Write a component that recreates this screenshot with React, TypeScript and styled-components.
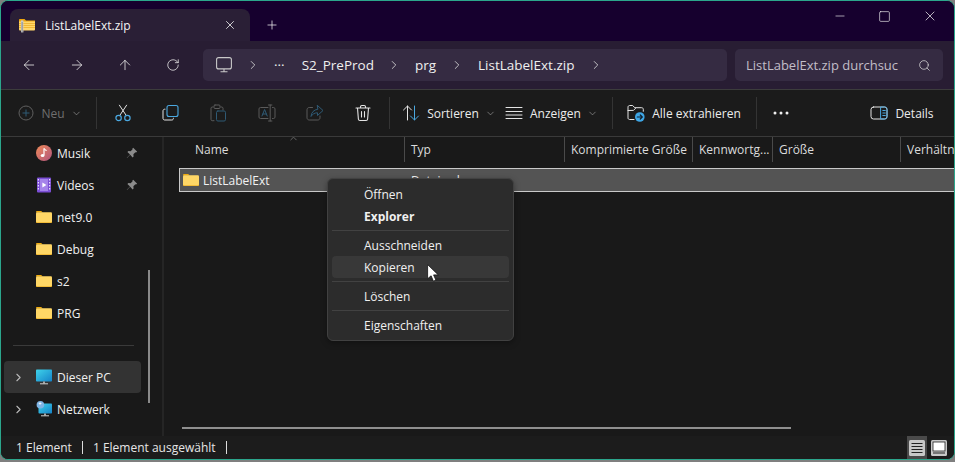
import React from "react";
import styled, { createGlobalStyle } from "styled-components";
import {
  ArrowLeft,
  ArrowRight,
  ArrowUp,
  ChevronDown,
  ChevronRight,
  ChevronUp,
  Minus,
  Plus,
  RotateCw,
  Search,
  Square,
  X,
} from "lucide-react";

const GlobalStyle = createGlobalStyle`
  html, body {
    margin: 0;
    background: #7f7f7f;
    overflow: hidden;
  }
  body {
    font-family: "Open Sans", "Noto Sans", "Liberation Sans", sans-serif;
    font-size: 12px;
    color: #ececec;
  }
`;

const FolderIcon: React.FC = () => (
  <svg width="16" height="16" viewBox="0 0 16 16">
    <path d="M0 3.2C0 2.5.5 2 1.2 2h4l1.6 1.6H0z" fill="#f0ab0e" />
    <path d="M0 4.5c0-.8.6-1.3 1.3-1.3h13.4c.7 0 1.3.5 1.3 1.3v8.2c0 .8-.6 1.3-1.3 1.3H1.3C.6 14 0 13.5 0 12.7z" fill="#ffd766" />
    <path d="M0 12.7c0 .8.6 1.3 1.3 1.3h13.4c.7 0 1.3-.5 1.3-1.3v-.4c0 .7-.6 1.1-1.3 1.1H1.3C.6 13.4 0 13 0 12.3z" fill="#e8a20c" />
  </svg>
);

const ZipIcon: React.FC = () => (
  <svg width="16" height="16" viewBox="0 0 16 16">
    <path d="M0 3C0 2.4.5 2 1 2h4.5L7 3.4H16V5H0z" fill="#eea60e" />
    <path d="M0 4.6h16v7.6c0 .8-.5 1.3-1.2 1.3H1.2C.5 13.5 0 13 0 12.2z" fill="#ffd76a" />
    <path d="M0 6.5h16M0 8.5h16M0 10.5h16" stroke="#e9a91d" strokeWidth="0.7" />
    <rect x="2" y="3.4" width="2.4" height="12" fill="#c9c9c9" />
    <path d="M2.4 6h1.6M2.4 8h1.6M2.4 10h1.6M2.4 12h1.6M2.4 14h1.6" stroke="#6d6d6d" strokeWidth="0.8" />
  </svg>
);

const MusicIcon: React.FC = () => (
  <svg width="16" height="16" viewBox="0 0 16 16">
    <defs>
      <linearGradient id="mus" x1="0" y1="0" x2="1" y2="1">
        <stop offset="0" stopColor="#ef8a58" />
        <stop offset="1" stopColor="#b0547e" />
      </linearGradient>
    </defs>
    <circle cx="8" cy="8" r="8" fill="url(#mus)" />
    <path d="M8 3.5v6.6" stroke="#fff" strokeWidth="1.2" />
    <path d="M8 3.4c.6 1.4 1.8 1.6 2.6 2.2" stroke="#fff" strokeWidth="1.1" fill="none" />
    <ellipse cx="6.6" cy="10.6" rx="1.9" ry="1.5" fill="#fff" />
  </svg>
);

const VideoIcon: React.FC = () => (
  <svg width="16" height="16" viewBox="0 0 16 16">
    <rect x="1" y="0.5" width="14" height="15" rx="1" fill="#7c4fd6" />
    <rect x="4" y="2" width="8" height="12" fill="#a583ea" />
    <path d="M1.8 2h1.2v1.6H1.8zM1.8 5h1.2v1.6H1.8zM1.8 8h1.2v1.6H1.8zM1.8 11h1.2v1.6H1.8zM13 2h1.2v1.6H13zM13 5h1.2v1.6H13zM13 8h1.2v1.6H13zM13 11h1.2v1.6H13z" fill="#e8defc" />
    <path d="M6.4 5.6l4 2.4-4 2.4z" fill="#fff" />
  </svg>
);

const PcIcon: React.FC = () => (
  <svg width="16" height="16" viewBox="0 0 16 16">
    <defs>
      <linearGradient id="pc" x1="0" y1="0" x2="1" y2="1">
        <stop offset="0" stopColor="#3fd3ea" />
        <stop offset="1" stopColor="#1583c9" />
      </linearGradient>
    </defs>
    <rect x="0" y="0.5" width="16" height="12" rx="0.8" fill="url(#pc)" />
    <rect x="7" y="12.5" width="2" height="2" fill="#a5a5a5" />
    <rect x="4" y="14.3" width="8" height="1" fill="#cfcfcf" />
  </svg>
);

const NetworkIcon: React.FC = () => (
  <svg width="16" height="16" viewBox="0 0 16 16">
    <rect x="2.5" y="2.5" width="13.5" height="10" rx="0.8" fill="url(#pc)" />
    <rect x="8" y="12.5" width="2" height="2" fill="#a5a5a5" />
    <rect x="5" y="14.3" width="8" height="1" fill="#cfcfcf" />
    <circle cx="4.4" cy="3.8" r="3.8" fill="#7fb4e4" />
    <path d="M2.6 2.2c1-.8 2.2-.8 3 .2-.4 1-1.2 1.4-2 1-.6-.2-.9-.7-1-1.2z" fill="#e8f2fb" />
  </svg>
);

const PinIcon: React.FC = () => (
  <svg width="12" height="12" viewBox="0 0 12 12">
    <path d="M7.2.8l4 4-1.2.6-.6-.2-2 2 .2 2.2-1 1-2.4-2.6L1 11l-.2-.2 3.2-3.3L1.4 5l1-1 2.2.2 2-2-.2-.6z" fill="#8b8b8b" />
  </svg>
);

const ToolSvg = styled.svg`
  width: 18px;
  height: 18px;
  fill: none;
  stroke-width: 1;
  stroke-linecap: round;
  stroke-linejoin: round;
`;

const CutIcon: React.FC = () => (
  <ToolSvg viewBox="0 0 18 18">
    <path d="M5.8 11.4L12.6 1.2M12.2 11.4L5.4 1.2" stroke="#e4e4e4" />
    <circle cx="4.6" cy="14" r="2.7" stroke="#4aa8e0" strokeWidth="1.2" />
    <circle cx="13.4" cy="14" r="2.7" stroke="#4aa8e0" strokeWidth="1.2" />
  </ToolSvg>
);

const CopyIcon: React.FC = () => (
  <ToolSvg viewBox="0 0 18 18">
    <path d="M3 5.2H2.6C1.7 5.2 1 6 1 6.9v7.5C1 15.3 1.7 16 2.6 16h7.2c1 0 1.6-.7 1.6-1.6v-.2" stroke="#e4e4e4" />
    <rect x="5" y="1.5" width="11" height="11" rx="2" stroke="#4aa8e0" strokeWidth="1.1" />
  </ToolSvg>
);

const PasteIcon: React.FC = () => (
  <ToolSvg viewBox="0 0 18 18">
    <path d="M3 3H2.2C1.5 3 1 3.6 1 4.2v11.3c0 .7.5 1.2 1.2 1.2H4M11 3h.8c.7 0 1.2.6 1.2 1.2V6" stroke="#5b5b5b" />
    <rect x="4" y="1" width="6" height="3.5" rx="1" stroke="#5b5b5b" />
    <rect x="6.5" y="7" width="9" height="10" rx="1.4" stroke="#2f5a75" />
  </ToolSvg>
);

const RenameIcon: React.FC = () => (
  <ToolSvg viewBox="0 0 18 18">
    <path d="M10 3.5H2.4C1.6 3.5 1 4.1 1 4.9v8.2c0 .8.6 1.4 1.4 1.4H10M14.5 3.5h1.1c.8 0 1.4.6 1.4 1.4v8.2c0 .8-.6 1.4-1.4 1.4h-1.1M12.2 1v16M10.5 1h3.4M10.5 17h3.4" stroke="#5b5b5b" />
    <path d="M4 12L6.6 5.5 9.2 12M5 10h3.2" stroke="#2f5a75" />
  </ToolSvg>
);

const ShareIcon: React.FC = () => (
  <ToolSvg viewBox="0 0 18 18">
    <path d="M6.5 3.5H3.2C2 3.5 1 4.5 1 5.7v8.1C1 15 2 16 3.2 16h8.6c1.2 0 2.2-1 2.2-2.2V12" stroke="#5b5b5b" />
    <path d="M11.5 1.5L17 6.5l-5.5 5V8.8c-2.8 0-5 1.1-6.5 3.7.3-4 2.8-6.8 6.5-7.2z" stroke="#2f5a75" />
  </ToolSvg>
);

const TrashIcon: React.FC = () => (
  <ToolSvg viewBox="0 0 18 18">
    <path d="M2 4h14M6.5 4V2.8C6.5 2 7 1.5 7.8 1.5h2.4c.8 0 1.3.5 1.3 1.3V4M3.5 4l.9 11.2c.1 1 .8 1.3 1.5 1.3h6.2c.7 0 1.4-.3 1.5-1.3L14.500 4M7.500 7.500v5.500M10.500 7.500v5.500" stroke="#e4e4e4" strokeWidth="1.1" />
  </ToolSvg>
);

const SortIcon: React.FC = () => (
  <ToolSvg viewBox="0 0 18 18">
    <path d="M5.5 16V2M1.500 6l4-4 4 4" stroke="#e4e4e4" />
    <path d="M12.500 2v14M8.500 12l4 4 4-4" stroke="#4aa8e0" />
  </ToolSvg>
);

const ViewIcon: React.FC = () => (
  <ToolSvg viewBox="0 0 18 18">
    <path d="M1 3.500h16M1 7.500h16M1 11h16M1 14.500h16" stroke="#e4e4e4" />
  </ToolSvg>
);

const ExtractIcon: React.FC = () => (
  <ToolSvg viewBox="0 0 18 18">
    <path d="M7 15.500H2.600C1.700 15.500 1 14.800 1 13.900V3.100C1 2.200 1.700 1.500 2.600 1.500h3.100l2 2.200h7c.9 0 1.600.7 1.600 1.600v2" stroke="#e4e4e4" />
    <path d="M1 6.500l5.500-.1 2-2" stroke="#e4e4e4" />
    <circle cx="12.800" cy="13" r="4.800" fill="#3ea6e6" />
    <path d="M10.300 13h4.800M13.300 11l2 2-2 2" stroke="#10202c" strokeWidth="1.200" />
  </ToolSvg>
);

const DetailsIcon: React.FC = () => (
  <ToolSvg viewBox="0 0 18 18">
    <rect x="1" y="3" width="16" height="12" rx="2.500" stroke="#e4e4e4" />
    <path d="M11 3h3.500C16 3 17 4 17 5.500v7c0 1.500-1 2.500-2.500 2.500H11z" stroke="#4aa8e0" />
    <path d="M12.800 6.500h2.500M12.800 9h2.500M12.800 11.500h2.500" stroke="#4aa8e0" />
  </ToolSvg>
);

const MoreDots: React.FC = () => (
  <svg width="16" height="4" viewBox="0 0 16 4">
    <circle cx="2" cy="2" r="1.500" fill="#f0f0f0" />
    <circle cx="8" cy="2" r="1.500" fill="#f0f0f0" />
    <circle cx="14" cy="2" r="1.500" fill="#f0f0f0" />
  </svg>
);

const PcOutlineIcon: React.FC = () => (
  <svg width="16" height="16" viewBox="0 0 16 16" fill="none" stroke="#c9c9c9" strokeWidth="1.100">
    <rect x="0.600" y="0.600" width="14.800" height="11.300" rx="2" />
    <path d="M8 12v2.500M4.500 14.800h7" />
  </svg>
);

const Cursor: React.FC = () => (
  <CursorSvg viewBox="0 0 12 18">
    <path d="M.6.6v14.200l3.500-3 2.300 5.400 2.500-1.100-2.300-5.200h4.700z" fill="#fff" stroke="#111" strokeWidth="0.800" />
  </CursorSvg>
);

const CursorSvg = styled.svg`
  position: absolute;
  left: 426px;
  top: 263px;
  width: 12px;
  height: 18px;
`;

const Frame = styled.div`
  position: relative;
  box-sizing: border-box;
  width: 955px;
  height: 460px;
  border: 1px solid #2ba68c;
  border-left-width: 1px;
  border-radius: 8px;
  overflow: hidden;
  display: flex;
  flex-direction: column;
  background: #191919;
`;

const TitleBar = styled.div`
  height: 40px;
  flex: none;
  background: #16002e;
  display: flex;
  align-items: flex-end;
  padding-left: 9px;
`;

const Tab = styled.div`
  width: 240px;
  height: 32px;
  background: #2a1f36;
  border-radius: 8px 8px 0 0;
  display: flex;
  align-items: center;
  padding: 0 13px 0 9px;
  box-sizing: border-box;
  gap: 10px;
`;

const TabTitle = styled.span`
  flex: 1;
  color: #f4f4f4;
  font-size: 12px;
`;

const NewTab = styled.div`
  width: 44px;
  height: 32px;
  display: flex;
  align-items: center;
  justify-content: center;
  color: #f0f0f0;
`;

const WindowControls = styled.div`
  margin-left: auto;
  align-self: flex-start;
  display: flex;
  margin-right: 2px;
`;

const WindowButton = styled.div`
  width: 45px;
  height: 30px;
  display: flex;
  align-items: center;
  justify-content: center;
  color: #f2f2f2;
`;

const NavBar = styled.div`
  height: 48px;
  flex: none;
  box-sizing: content-box;
  background: #281d33;
  border-bottom: 1px solid #3c3c3c;
  display: flex;
  align-items: center;
  padding-left: 4px;
`;

const NavButton = styled.div`
  width: 48px;
  height: 32px;
  display: flex;
  align-items: center;
  justify-content: center;
  color: #ededed;
`;

const Field = styled.div`
  height: 32px;
  background: #352b42;
  border-radius: 5px;
  display: flex;
  align-items: center;
  font-size: 13.500px;
  box-sizing: border-box;
`;

const Breadcrumb = styled(Field)`
  width: 524px;
  margin-left: 6px;
  padding-left: 13px;
  color: #efefef;
`;

const SearchField = styled(Field)`
  width: 208px;
  margin-left: 8px;
  padding: 0 12px 0 11px;
  justify-content: space-between;
  color: #c2bec8;
  font-size: 13px;
  white-space: nowrap;
`;

const Crumb = styled.span`
  white-space: nowrap;
`;

const CrumbArrow = styled.span<{ $before: number; $after: number }>`
  display: flex;
  color: #dddddd;
  margin: 0 ${(p) => p.$after}px 0 ${(p) => p.$before}px;
`;

const Toolbar = styled.div`
  height: 46px;
  flex: none;
  background: #1b1b1b;
  border-bottom: 1px solid #3a3a3a;
  display: flex;
  align-items: center;
  padding-left: 11px;
`;

const ToolButton = styled.div<{ $w: number; $dim?: boolean }>`
  width: ${(p) => p.$w}px;
  height: 32px;
  flex: none;
  display: flex;
  align-items: center;
  justify-content: center;
  gap: 7px;
  color: ${(p) => (p.$dim ? "#6f6f6f" : "#ececec")};
  white-space: nowrap;
`;

const ToolCaret = styled(ChevronDown)`
  color: #a8a8a8;
  margin-left: -1px;
`;

const ToolDivider = styled.div<{ $l: number; $r: number }>`
  width: 1px;
  height: 32px;
  flex: none;
  background: #343434;
  margin: 0 ${(p) => p.$r}px 0 ${(p) => p.$l}px;
`;

const Spacer = styled.div`
  flex: 1;
`;

const Main = styled.div`
  position: relative;
  flex: 1;
  min-height: 0;
  display: flex;
  background: #191919;
`;

const Sidebar = styled.nav`
  position: relative;
  width: 158px;
  flex: none;
  border-right: 2px solid #252525;
  padding-left: 3px;
  box-sizing: content-box;
  margin-right: 0;
`;

const SideRow = styled.div<{ $active?: boolean }>`
  width: 137px;
  height: 32px;
  box-sizing: border-box;
  display: flex;
  align-items: center;
  padding: 0 3px 0 8px;
  border-radius: 4px;
  background: ${(p) => (p.$active ? "#333333" : "transparent")};
  color: #f0f0f0;
`;

const Expander = styled.span`
  width: 24px;
  display: flex;
  color: #b9b9b9;
`;

const SideLabel = styled.span`
  margin-left: 5px;
  flex: 1;
`;

const SideSeparator = styled.div`
  height: 32px;
  display: flex;
  align-items: center;
  padding: 0 9px;
  width: 121px;
  &::after {
    content: "";
    flex: 1;
    height: 1px;
    background: #3a3a3a;
  }
`;

const SideScroll = styled.div`
  position: absolute;
  left: 147px;
  top: 133px;
  width: 2px;
  height: 133px;
  background: #8a8a8a;
`;

const Content = styled.section`
  position: relative;
  flex: 1;
  min-width: 0;
  overflow: hidden;
  padding-left: 15px;
`;

const columns = "226px 160px 128px 80px 128px 1fr";

const HeaderRow = styled.div`
  height: 31px;
  display: grid;
  grid-template-columns: ${columns};
`;

const HeaderCell = styled.div<{ $first?: boolean }>`
  height: 25px;
  box-sizing: border-box;
  display: flex;
  align-items: center;
  white-space: nowrap;
  overflow: hidden;
  padding-left: ${(p) => (p.$first ? 16 : 6)}px;
  border-right: 1px solid #4a4a4a;
  color: #dcdcdc;
  &:last-child {
    border-right: 0;
  }
`;

const SortCaret = styled(ChevronUp)`
  position: absolute;
  left: 124px;
  top: -4px;
  color: #9a9a9a;
`;

const FileRow = styled.div`
  height: 24px;
  box-sizing: border-box;
  display: grid;
  grid-template-columns: ${columns};
  align-items: center;
  background: #545454;
  border: 1px solid #c9c9c9;
  border-right: 0;
  color: #f2f2f2;
`;

const FileName = styled.div`
  display: flex;
  align-items: center;
  gap: 4px;
  padding-left: 3px;
`;

const FileType = styled.div`
  padding-left: 5px;
`;

const HScroll = styled.div`
  position: absolute;
  left: 18px;
  bottom: 7px;
  width: 609px;
  height: 2px;
  background: #8f8f8f;
`;

const Menu = styled.div`
  position: absolute;
  left: 326px;
  top: 177px;
  width: 187px;
  box-sizing: border-box;
  padding: 4px;
  background: #2c2c2c;
  border: 1px solid #414141;
  border-radius: 6px;
  box-shadow: 0 2px 6px rgba(0, 0, 0, 0.35);
`;

const MenuItem = styled.div<{ $bold?: boolean; $hover?: boolean }>`
  height: 22px;
  display: flex;
  align-items: center;
  padding-left: 32px;
  border-radius: 4px;
  color: #f0f0f0;
  font-weight: ${(p) => (p.$bold ? 700 : 400)};
  background: ${(p) => (p.$hover ? "#383838" : "transparent")};
`;

const MenuSeparator = styled.div`
  height: 7px;
  display: flex;
  align-items: center;
  &::after {
    content: "";
    flex: 1;
    height: 1px;
    background: #424242;
  }
`;

const StatusBar = styled.div`
  height: 23px;
  flex: none;
  background: #1c1c1c;
  display: flex;
  align-items: center;
  padding-left: 15px;
  color: #e6e6e6;
`;

const StatusDivider = styled.span`
  width: 1px;
  height: 13px;
  background: #dcdcdc;
  margin: 0 10px;
`;

const ViewToggle = styled.div`
  margin-left: auto;
  margin-right: 5px;
  display: flex;
  gap: 2px;
  align-items: center;
  height: 100%;
`;

const ToggleButton = styled.div<{ $active?: boolean }>`
  width: 20px;
  height: 23px;
  display: flex;
  align-items: center;
  justify-content: center;
  background: ${(p) => (p.$active ? "#4a4a4a" : "transparent")};
`;

const sideItems = [
  { label: "Musik", icon: <MusicIcon />, pin: true },
  { label: "Videos", icon: <VideoIcon />, pin: true },
  { label: "net9.0", icon: <FolderIcon /> },
  { label: "Debug", icon: <FolderIcon /> },
  { label: "s2", icon: <FolderIcon /> },
  { label: "PRG", icon: <FolderIcon /> },
];

const headers = ["Typ", "Komprimierte Größe", "Kennwortg...", "Größe", "Verhältnis"];

export default function App() {
  return (
    <>
      <GlobalStyle />
      <Frame>
        <TitleBar>
          <Tab>
            <ZipIcon />
            <TabTitle>ListLabelExt.zip</TabTitle>
            <X size={14} strokeWidth={1.4} color="#f0f0f0" />
          </Tab>
          <NewTab>
            <Plus size={14} strokeWidth={1.3} />
          </NewTab>
          <WindowControls>
            <WindowButton>
              <Minus size={14} strokeWidth={1.1} />
            </WindowButton>
            <WindowButton>
              <Square size={13} strokeWidth={1.2} />
            </WindowButton>
            <WindowButton>
              <X size={16} strokeWidth={1.1} />
            </WindowButton>
          </WindowControls>
        </TitleBar>

        <NavBar>
          <NavButton>
            <ArrowLeft size={16} strokeWidth={1.2} />
          </NavButton>
          <NavButton>
            <ArrowRight size={16} strokeWidth={1.2} />
          </NavButton>
          <NavButton>
            <ArrowUp size={16} strokeWidth={1.2} />
          </NavButton>
          <NavButton>
            <RotateCw size={14} strokeWidth={1.3} />
          </NavButton>
          <Breadcrumb>
            <PcOutlineIcon />
            <CrumbArrow $before={14} $after={14}>
              <ChevronRight size={14} strokeWidth={1.4} />
            </CrumbArrow>
            <Crumb>···</Crumb>
            <CrumbArrow $before={17} $after={0} />
            <Crumb>S2_PreProd</Crumb>
            <CrumbArrow $before={13} $after={14}>
              <ChevronRight size={14} strokeWidth={1.4} />
            </CrumbArrow>
            <Crumb>prg</Crumb>
            <CrumbArrow $before={14} $after={14}>
              <ChevronRight size={14} strokeWidth={1.4} />
            </CrumbArrow>
            <Crumb>ListLabelExt.zip</Crumb>
            <CrumbArrow $before={15} $after={0}>
              <ChevronRight size={14} strokeWidth={1.4} />
            </CrumbArrow>
          </Breadcrumb>
          <SearchField>
            <span>ListLabelExt.zip durchsuc</span>
            <Search size={13} strokeWidth={1.4} color="#d8d8d8" />
          </SearchField>
        </NavBar>

        <Toolbar>
          <ToolButton $w={76} $dim>
            <svg width="16" height="16" viewBox="0 0 16 16" fill="none" stroke="#5f5f5f">
              <circle cx="8" cy="8" r="7" />
              <path d="M8 4.500v7M4.500 8h7" stroke="#2f5a75" />
            </svg>
            <span>Neu</span>
            <ToolCaret size={11} strokeWidth={1.3} />
          </ToolButton>
          <ToolDivider $l={8} $r={2} />
          <ToolButton $w={48}><CutIcon /></ToolButton>
          <ToolButton $w={48}><CopyIcon /></ToolButton>
          <ToolButton $w={48}><PasteIcon /></ToolButton>
          <ToolButton $w={48}><RenameIcon /></ToolButton>
          <ToolButton $w={48}><ShareIcon /></ToolButton>
          <ToolButton $w={48}><TrashIcon /></ToolButton>
          <ToolDivider $l={2} $r={8} />
          <ToolButton $w={102}>
            <SortIcon />
            <span>Sortieren</span>
            <ToolCaret size={11} strokeWidth={1.3} />
          </ToolButton>
          <ToolButton $w={103}>
            <ViewIcon />
            <span>Anzeigen</span>
            <ToolCaret size={11} strokeWidth={1.3} />
          </ToolButton>
          <ToolDivider $l={9} $r={10} />
          <ToolButton $w={122}>
            <ExtractIcon />
            <span>Alle extrahieren</span>
          </ToolButton>
          <ToolDivider $l={11} $r={8} />
          <ToolButton $w={32}><MoreDots /></ToolButton>
          <Spacer />
          <ToolButton $w={76}>
            <DetailsIcon />
            <span>Details</span>
          </ToolButton>
          <Spacer as="span" style={{ flex: "0 0 14px" }} />
        </Toolbar>

        <Main>
          <Sidebar>
            {sideItems.map((item) => (
              <SideRow key={item.label}>
                <Expander />
                {item.icon}
                <SideLabel>{item.label}</SideLabel>
                {item.pin ? <PinIcon /> : null}
              </SideRow>
            ))}
            <SideSeparator />
            <SideRow $active>
              <Expander><ChevronRight size={13} strokeWidth={2} /></Expander>
              <PcIcon />
              <SideLabel>Dieser PC</SideLabel>
            </SideRow>
            <SideRow>
              <Expander><ChevronRight size={13} strokeWidth={2} /></Expander>
              <NetworkIcon />
              <SideLabel>Netzwerk</SideLabel>
            </SideRow>
            <SideScroll />
          </Sidebar>
          <Content>
            <HeaderRow>
              <HeaderCell $first>Name</HeaderCell>
              {headers.map((h) => (
                <HeaderCell key={h}>{h}</HeaderCell>
              ))}
            </HeaderRow>
            <SortCaret size={11} strokeWidth={1.3} />
            <FileRow>
              <FileName>
                <FolderIcon />
                <span>ListLabelExt</span>
              </FileName>
              <FileType>Dateiordner</FileType>
            </FileRow>
            <HScroll />
          </Content>
        </Main>

        <StatusBar>
          <span>1 Element</span>
          <StatusDivider />
          <span>1 Element ausgewählt</span>
          <StatusDivider />
          <ViewToggle>
            <ToggleButton $active>
              <svg width="16" height="16" viewBox="0 0 16 16">
                <rect width="16" height="16" rx="1.500" fill="#c8c8c8" />
                <path d="M2.500 3.500h11M2.500 6.500h11M2.500 9.500h11M2.500 12.500h11" stroke="#222" strokeWidth="1" />
              </svg>
            </ToggleButton>
            <ToggleButton>
              <svg width="16" height="16" viewBox="0 0 16 16">
                <rect width="16" height="16" rx="1.500" fill="#c8c8c8" />
                <rect x="2" y="2" width="12" height="9" fill="#fff" stroke="#222" strokeWidth="0.800" />
                <path d="M2 13h12" stroke="#222" />
              </svg>
            </ToggleButton>
          </ViewToggle>
        </StatusBar>

        <Menu>
          <MenuItem>Öffnen</MenuItem>
          <MenuItem $bold>Explorer</MenuItem>
          <MenuSeparator />
          <MenuItem>Ausschneiden</MenuItem>
          <MenuItem $hover>Kopieren</MenuItem>
          <MenuSeparator />
          <MenuItem>Löschen</MenuItem>
          <MenuSeparator />
          <MenuItem>Eigenschaften</MenuItem>
        </Menu>
        <Cursor />
      </Frame>
    </>
  );
}
